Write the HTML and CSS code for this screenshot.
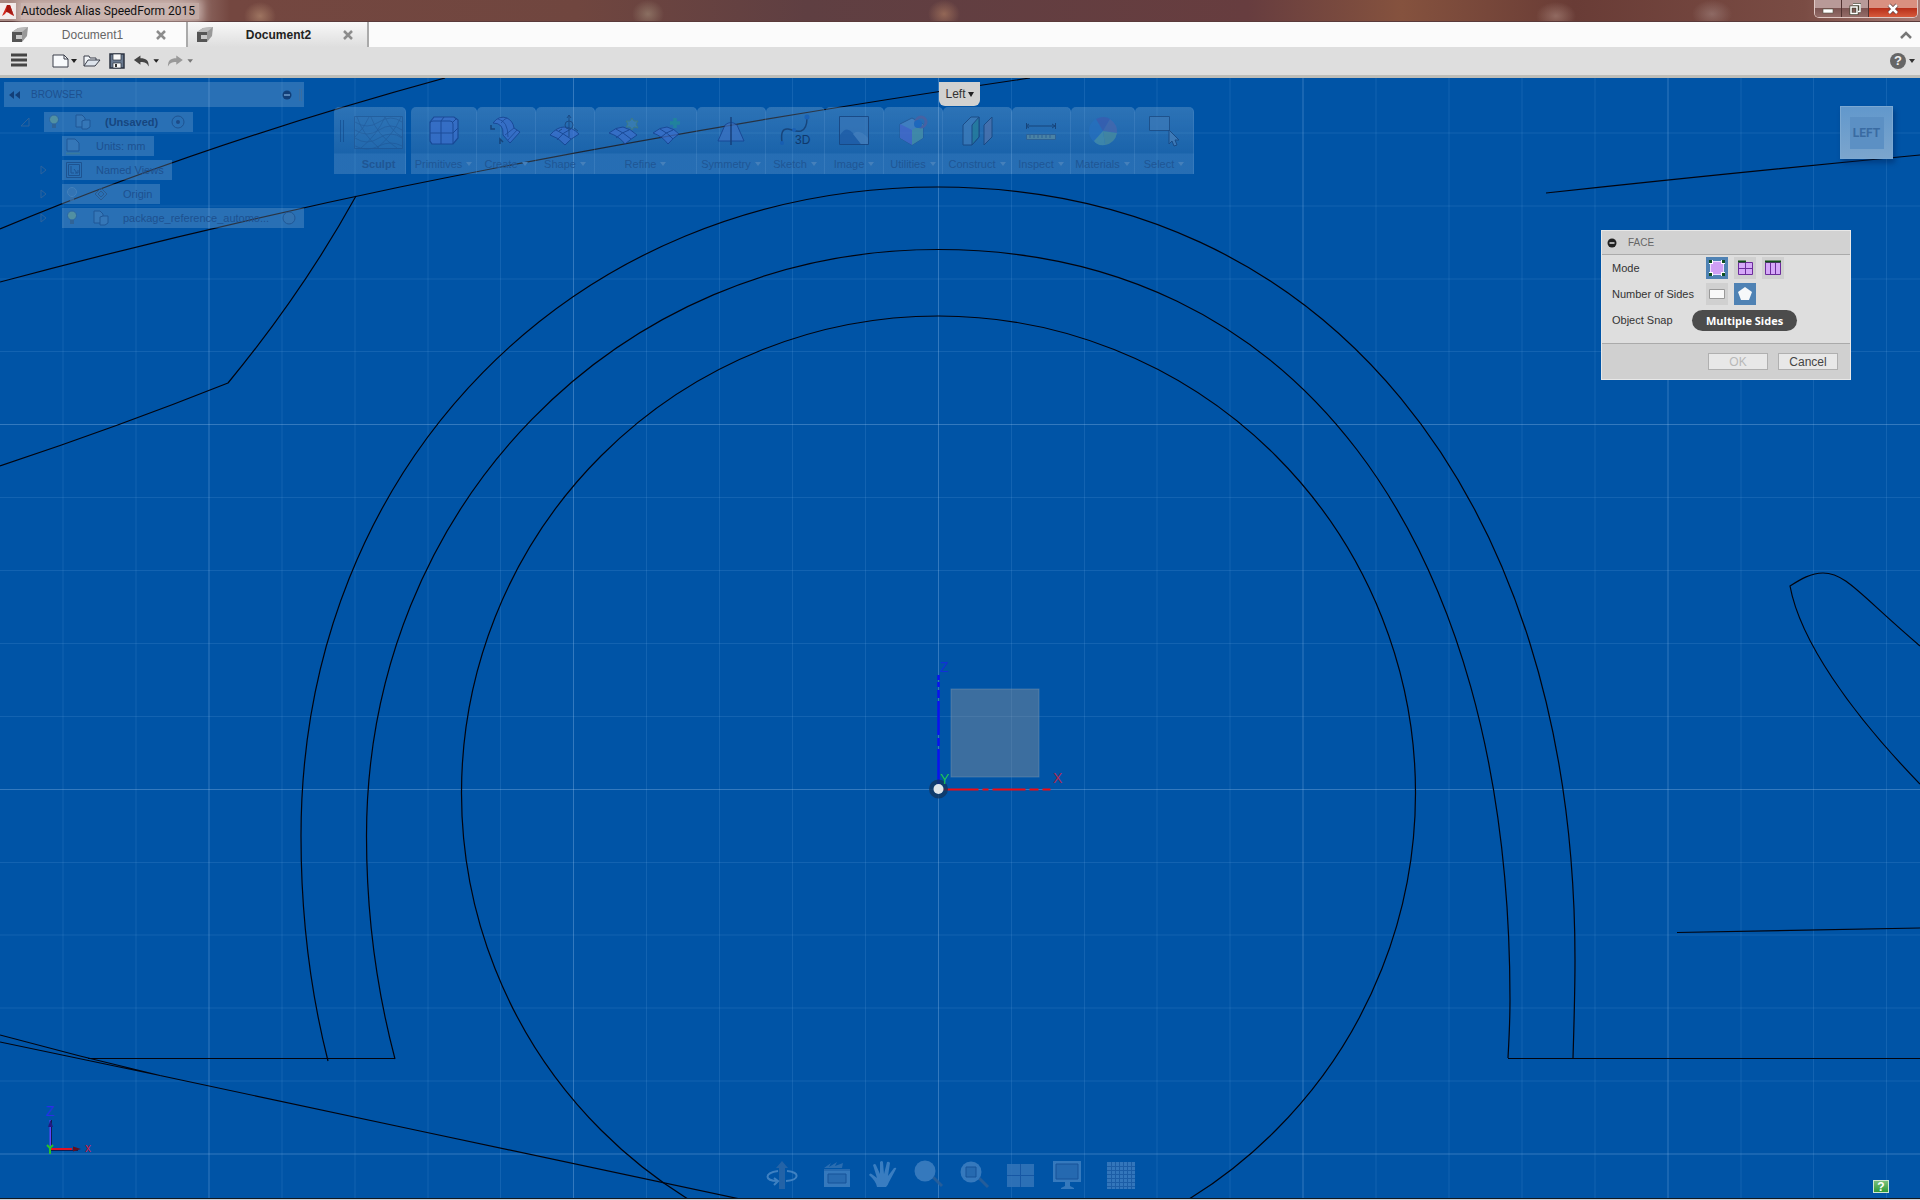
FILE: index.html
```html
<!DOCTYPE html>
<html lang="en">
<head>
  <meta charset="UTF-8">
  <meta name="viewport" content="width=device-width, initial-scale=1.0">
  <title>Autodesk Alias SpeedForm 2015</title>
  <link rel="stylesheet" href="styles.css">
</head>
<body>
  <!-- Title bar -->
  <header class="titlebar">
    <svg class="app-logo" width="16" height="16" viewBox="0 0 16 16"><rect width="16" height="16" fill="#f4eeee"/><path d="M2 13L7 2h3l4 11-4-2-3-3-2 3z" fill="#d3281e"/><path d="M7 2l-1 7 4 1 4 3-4-11z" fill="#a3150f"/></svg>
    <span class="app-title">Autodesk Alias SpeedForm 2015</span>
    <div class="window-buttons">
      <button aria-label="Minimize"><svg width="12" height="12" viewBox="0 0 12 12"><rect x="1" y="6" width="10" height="4" fill="#fff" stroke="#554" stroke-width=".6"/></svg></button>
      <button aria-label="Restore"><svg width="12" height="12" viewBox="0 0 12 12"><path d="M4 1h7v7h-2M2 4h6v7H2z" fill="none" stroke="#443" stroke-width="3"/><path d="M4 1.500h7v7h-2M2 4h6v6.500H2z" fill="none" stroke="#fff" stroke-width="1.500"/></svg></button>
      <button class="close" aria-label="Close"><svg width="12" height="12" viewBox="0 0 12 12"><path d="M2 2l8 8M10 2l-8 8" stroke="#644" stroke-width="4"/><path d="M2 2l8 8M10 2l-8 8" stroke="#fff" stroke-width="2.500"/></svg></button>
    </div>
  </header>

  <!-- Document tabs -->
  <nav class="tabs">
    <div class="tab">
      <svg width="18" height="18" viewBox="0 0 18 18"><path d="M1 6l6-4 10-1-1 9-5 6H1z" fill="#999"/><path d="M1 6h10v10H1z" fill="#555"/><path d="M1 6l6-4 10-1-6 5z" fill="#bbb"/><path d="M5 9h6v4H5z" fill="#c8c8c8"/></svg>
      <a href="#">Document1</a>
      <button aria-label="Close Document1"><svg width="10" height="10" viewBox="0 0 10 10"><path d="M1 1l8 8M9 1l-8 8" stroke="#8c8c8c" stroke-width="2.500"/></svg></button>
    </div>
    <div class="tab active">
      <svg width="18" height="18" viewBox="0 0 18 18"><path d="M1 6l6-4 10-1-1 9-5 6H1z" fill="#999"/><path d="M1 6h10v10H1z" fill="#555"/><path d="M1 6l6-4 10-1-6 5z" fill="#bbb"/><path d="M5 9h6v4H5z" fill="#c8c8c8"/></svg>
      <a href="#">Document2</a>
      <button aria-label="Close Document2"><svg width="10" height="10" viewBox="0 0 10 10"><path d="M1 1l8 8M9 1l-8 8" stroke="#8c8c8c" stroke-width="2.500"/></svg></button>
    </div>
    <button class="collapse" aria-label="Collapse"><svg width="14" height="10" viewBox="0 0 14 10"><path d="M2 8l5-5 5 5" fill="none" stroke="#777" stroke-width="2.500"/></svg></button>
  </nav>

  <!-- Quick access bar -->
  <div class="quickbar">
    <button class="menu" aria-label="Menu"><svg width="18" height="16" viewBox="0 0 18 16"><path d="M1 2h16M1 7h16M1 12h16" stroke="#444" stroke-width="3"/></svg></button>
    <button class="new" aria-label="New"><svg width="26" height="16" viewBox="0 0 26 16"><path d="M1 2h11l4 4v8H1z" fill="#f8fafc" stroke="#3a3f4a"/><path d="M12 2v4h4" fill="none" stroke="#3a3f4a"/><path d="M19 6h6l-3 4z" fill="#222"/></svg></button>
    <button aria-label="Open"><svg width="18" height="16" viewBox="0 0 18 16"><path d="M1 13V3h5l1 2h6v2" fill="#f2f5f8" stroke="#3a3f4a"/><path d="M1 13l4-6h12l-5 6z" fill="#dde4ec" stroke="#3a3f4a"/></svg></button>
    <button aria-label="Save"><svg width="16" height="16" viewBox="0 0 16 16"><path d="M1 1h14v14H1z" fill="#6a7a90" stroke="#2c3340" stroke-width="1.500"/><path d="M4 1h8v6H4zM4 10h8v5H4z" fill="#f8f8f8" stroke="#2c3340" stroke-width=".7"/><path d="M6 11h2v3H6z" fill="#333"/></svg></button>
    <button aria-label="Undo"><svg width="26" height="14" viewBox="0 0 28 14"><path d="M1 6l7-5v3c6 0 9 2 9 9-2-4-4-5-9-5v3z" fill="#444"/><path d="M22 5h6l-3 4z" fill="#222"/></svg></button>
    <button aria-label="Redo"><svg width="26" height="14" viewBox="0 0 28 14"><path d="M17 6l-7-5v3c-6 0-9 2-9 9 2-4 4-5 9-5v3z" fill="#999"/><path d="M22 5h6l-3 4z" fill="#777"/></svg></button>
    <button class="help" aria-label="Help"><span class="help-mark">?</span><svg width="6" height="4" viewBox="0 0 6 4"><path d="M0 0h6l-3 4z" fill="#333"/></svg></button>
  </div>

  <main class="viewport">
    <!-- Drawing canvas -->
    <svg class="canvas" viewBox="0 78 1920 1120" preserveAspectRatio="xMidYMin slice">
      <path class="grid-minor" d="M63 78v1120M136 78v1120M282 78v1120M355 78v1120M428 78v1120M500.500 78v1120M646.500 78v1120M719.500 78v1120M792.500 78v1120M865.500 78v1120M1011.500 78v1120M1084.500 78v1120M1157 78v1120M1230 78v1120M1376 78v1120M1449 78v1120M1522 78v1120M1595 78v1120M1741 78v1120M1813.500 78v1120M1886.500 78v1120M0 133h1920M0 206h1920M0 279h1920M0 351.500h1920M0 497.500h1920M0 570.500h1920M0 643.500h1920M0 716.500h1920M0 862.500h1920M0 935h1920M0 1008h1920M0 1081h1920"/>
      <path class="grid-major" d="M209 78v1120M573.500 78v1120M938.500 78v1120M1303 78v1120M1668 78v1120M0 424.500h1920M0 789.500h1920M0 1154h1920"/>

      <g class="sketch">
        <!-- body lines -->
        <path d="M0 229Q200 145 445 78"/>
        <path d="M0 282Q195 230 400 187Q700 126 1030 78"/>
        <path d="M356 196Q303 292 228 383Q120 426 0 466"/>
        <path d="M1546 193Q1720 174 1920 155"/>
        <path d="M1677 932.500L1920 928"/>
        <path d="M1920 646C1860 595 1846 573 1823 573C1811 573 1801 579 1790 586C1800 640 1850 712 1920 784"/>
        <!-- ground -->
        <path d="M88 1058.500H395M1508 1058.500H1920"/>
        <path d="M0 1035L80 1056L160 1075.500M0 1042L160 1075.500L420 1131L740 1199"/>
        <!-- wheel and arches -->
        <circle cx="938.500" cy="793" r="477"/>
        <path d="M328 1061C310 990 301 915 301 836C301 465 574 187 938 187C1323 187 1575 493 1575 960C1575 993 1574 1025 1573 1058"/>
        <path d="M395 1059C376 987 366.500 912 366.500 836C366.500 507 617 249.500 938 249.500C1293 249.500 1510 534 1510 1000C1510 1020 1509 1040 1508 1058"/>
      </g>

      <!-- origin -->
      <rect x="951" y="689" width="88" height="88" fill="#969696" fill-opacity=".4" stroke="#7f9db8" stroke-opacity=".4"/>
      <path d="M938.500 789V675" stroke="#0a12f0" stroke-width="2.500" stroke-dasharray="40 3 8 3 34 3 8 3 5 2"/>
      <path d="M938.500 789.500H1052" stroke="#f00a12" stroke-width="2" stroke-dasharray="40 4 6 4 33 4 9 4 8 9"/>
      <circle cx="938.500" cy="789" r="7" fill="none" stroke="#12365f" stroke-opacity=".8" stroke-width="5"/>
      <circle cx="938.500" cy="789" r="5" fill="#dfe6ea"/>
      <text x="940" y="672" fill="#1230d8">Z</text>
      <text x="940" y="784" fill="#1fc455">Y</text>
      <text x="1053" y="783" fill="#a82850">X</text>

      <!-- small triad -->
      <path d="M50.500 1149v-29" stroke="#5a45ff" stroke-width="2"/>
      <path d="M51.500 1149v-29M50 1150.500h28" stroke="#111c50"/>
      <path d="M50 1149h22" stroke="#e01225" stroke-width="2"/>
      <path d="M73 1146.500l8 2.500-8 2.500z" fill="#601020"/>
      <path d="M48 1127l2.500-7 2.500 7z" fill="#241a80"/>
      <path d="M47 1145l3 3 3-3M50 1148v6" stroke="#28c428" stroke-width="2" fill="none"/>
      <text x="46" y="1116" fill="#2a2fe8">Z</text>
      <text class="small" x="85" y="1152" fill="#c51a40">x</text>
    </svg>

    <!-- Browser panel -->
    <section class="browser">
      <div class="browser-head">
        <svg width="12" height="8" viewBox="0 0 12 8"><path d="M5 0v8L0 4zM11 0v8L6 4z" fill="#123f78"/></svg>
        <span class="browser-title">BROWSER</span>
        <svg width="20" height="12" viewBox="0 0 20 12"><circle cx="5" cy="6" r="4.500" fill="#123f78"/><path d="M2 6h6" stroke="#6f9dcb" stroke-width="1.500"/><path d="M17.500 0v12M19.500 0v12" stroke="#3f6b9a" stroke-width=".7"/></svg>
      </div>
      <ul class="tree">
        <li class="root">
          <svg class="arrow" width="10" height="10" viewBox="0 0 10 10"><path d="M9 1v8H1z" fill="none" stroke="#2d639d"/></svg>
          <div class="node">
            <svg class="bulb" width="14" height="16" viewBox="0 0 14 16"><circle cx="7" cy="5.500" r="4.500" fill="#5f9b9c" stroke="#2b629d"/><path d="M5 10h4v4H5z" fill="#315f8d"/></svg>
            <svg class="doc" width="18" height="18" viewBox="0 0 18 18"><path d="M2 2h6l3 3v2h5v7l-3 2H8v-2H2zM8 14V8l3-1" fill="#3a7ab9" stroke="#1c4f8d"/></svg>
            <b>(Unsaved)</b>
            <svg width="14" height="14" viewBox="0 0 14 14"><circle cx="7" cy="7" r="6" fill="none" stroke="#1a4a86"/><circle cx="7" cy="7" r="2" fill="#1a3f78"/></svg>
          </div>
        </li>
        <li>
          <div class="node">
            <svg class="doc" width="18" height="18" viewBox="0 0 18 18"><path d="M2 2h8l4 4v8H2z" fill="#3a7ab9" stroke="#1c4f8d"/><path d="M1 16.500h14" stroke="#3d7c98" stroke-width="2"/></svg>
            <span>Units: mm</span>
          </div>
        </li>
        <li>
          <svg class="arrow" width="10" height="10" viewBox="0 0 10 10"><path d="M3 1l5 4-5 4z" fill="none" stroke="#2d639d"/></svg>
          <div class="node">
            <svg class="doc" width="18" height="18" viewBox="0 0 18 18"><path d="M1.500 1.500h15v15h-15zM3.500 3.500h11v11h-11zM6 5v7h3M9 8l3 4M10 12h3V9" fill="none" stroke="#1a4a86"/></svg>
            <span>Named Views</span>
          </div>
        </li>
        <li>
          <svg class="arrow" width="10" height="10" viewBox="0 0 10 10"><path d="M3 1l5 4-5 4z" fill="none" stroke="#2d639d"/></svg>
          <div class="node">
            <svg class="bulb" width="14" height="16" viewBox="0 0 14 16"><circle cx="7" cy="6" r="4.500" fill="#3776b4" stroke="#4c86bd"/><path d="M5 11h4v4H5z" fill="#396fa7"/></svg>
            <svg class="doc" width="18" height="18" viewBox="0 0 18 18"><path d="M9 3l6 6-6 6-6-6zM9 6l3 3-3 3-3-3z" fill="none" stroke="#2a5486"/></svg>
            <span>Origin</span>
          </div>
        </li>
        <li>
          <svg class="arrow" width="10" height="10" viewBox="0 0 10 10"><path d="M3 1l5 4-5 4z" fill="none" stroke="#2d639d"/></svg>
          <div class="node long">
            <svg class="bulb" width="14" height="16" viewBox="0 0 14 16"><circle cx="7" cy="5.500" r="4.500" fill="#5f9b9c" stroke="#2b629d"/><path d="M5 10h4v4H5z" fill="#315f8d"/></svg>
            <svg class="doc" width="18" height="18" viewBox="0 0 18 18"><path d="M2 2h6l3 3v2h5v7l-3 2H8v-2H2zM8 14V8l3-1" fill="#3a7ab9" stroke="#1c4f8d"/></svg>
            <span>package_reference_automo...</span>
            <svg width="14" height="14" viewBox="0 0 14 14"><circle cx="7" cy="7" r="6" fill="#3573b0" stroke="#1f508c"/></svg>
          </div>
        </li>
      </ul>
    </section>

    <!-- Ribbon -->
    <div class="ribbon">
      <button class="tool sculpt">
        <svg width="70" height="42" viewBox="0 0 70 42"><path d="M5.500 12v22M8.500 12v22" stroke="#0d4080"/><path d="M19.500 8.500h48v32h-48z" fill="#3d7cba" fill-opacity=".4" stroke="#1f4f8a"/><path d="M20 14q12 8 24 0t23 0M20 22q12 8 24 0t23 0M20 30q12 8 24 0t23 0M20 38q12 6 24 0t23 0M22 9q6 18 22 31M36 9q6 18 26 31M50 9q6 14 17 20M66 9q-8 18-24 31M50 9q-8 18-24 31M34 9q-4 10-14 20" fill="none" stroke="#1f4f8a" stroke-width=".7"/></svg>
        <span class="label"><b>Sculpt</b></span>
      </button>
      <div class="tools">
        <button class="tool">
          <svg width="34" height="34" viewBox="0 0 34 34"><path d="M3 9l4-5h20l4 3v18l-5 6H5l-2-3z" fill="#3c6fce" stroke="#153c8c" stroke-width="1.200"/><path d="M3 10q1-2 3-2h17q3 0 3 3v20M26 9l4-4M14 8v23M3 20h23M14 8l3-4M26 20l5-5" fill="none" stroke="#153c8c"/></svg>
          <span class="label">Primitives<i></i></span>
        </button>
        <button class="tool">
          <svg width="34" height="34" viewBox="0 0 34 34"><path d="M4 10q6-8 14-5 6 3 7 10l6 4-10 11-7-8q1-12-10-12z" fill="#3c6fce" stroke="#153c8c"/><path d="M9 6q10 2 10 18M18 5q-3 1-6 5M25 15l-9 7M28 17l-9 10" fill="none" stroke="#153c8c" stroke-width=".8"/><path d="M2 12v4h4M11 31v-5l3 3" fill="none" stroke="#123565" stroke-width="1.500"/></svg>
          <span class="label">Create<i></i></span>
        </button>
        <button class="tool">
          <svg width="34" height="34" viewBox="0 0 34 34"><path d="M2 22q7-8 14-8 8 0 15 7-9 5-14 11-7-8-15-10z" fill="#3c6fce" stroke="#153c8c"/><path d="M9 27q6-8 14-11M8 17q8 4 15 9" fill="none" stroke="#153c8c"/><circle cx="21" cy="12" r="4" fill="none" stroke="#173f75"/><path d="M21 2v22M19 5l2-3 2 3M14 16l-3 2M26 15l4 3" fill="none" stroke="#173f75"/></svg>
          <span class="label">Shape<i></i></span>
        </button>
        <button class="tool">
          <span class="pair">
            <svg width="34" height="34" viewBox="0 0 34 34"><path d="M2 20q7-6 14-6 8 2 14 8-6 4-12 9-6-8-16-11z" fill="#3c6fce" stroke="#153c8c"/><path d="M9 25q6-6 13-8M9 16q8 4 15 10" fill="none" stroke="#153c8c"/><path d="M25 5l2 3 4 0-2 3 2 4-4-1-2 3-2-3-4 0 2-3-2-3 4 0z" fill="#3e81b2" stroke="#447f75"/></svg>
            <svg width="34" height="34" viewBox="0 0 34 34"><path d="M2 20q7-6 14-6 8 2 12 7-6 4-11 10-6-8-15-11z" fill="#3c6fce" stroke="#153c8c"/><path d="M9 25q6-6 13-8M9 16q8 4 13 10" fill="none" stroke="#153c8c"/><path d="M24 5v10M19 10h10" stroke="#1f8d95" stroke-width="3.500"/></svg>
          </span>
          <span class="label">Refine<i></i></span>
        </button>
        <button class="tool">
          <svg width="34" height="34" viewBox="0 0 34 34"><path d="M4 28l7-16q6-5 12 0l7 16z" fill="#3c72c4" stroke="#153c8c"/><path d="M17 4v28" stroke="#122f66" stroke-width="1.500"/></svg>
          <span class="label">Symmetry<i></i></span>
        </button>
        <button class="tool">
          <svg width="34" height="34" viewBox="0 0 34 34"><path d="M4 29q-2-14 6-13c6 1 6 3 13 2q6-2 6-13" fill="none" stroke="#123565" stroke-width="1.500"/><circle cx="4" cy="30" r="2" fill="#155bb5"/><circle cx="29" cy="4" r="2.500" fill="#155bb5"/><circle cx="16" cy="17" r="2" fill="#155bb5"/><text x="17" y="31" class="icon-text">3D</text></svg>
          <span class="label">Sketch<i></i></span>
        </button>
        <button class="tool">
          <svg width="34" height="34" viewBox="0 0 34 34"><path d="M2.500 3.500h29v28h-29z" fill="#3876b8" stroke="#153c75"/><path d="M3 31V22q6-10 13-2l8 11z" fill="#1f5ba6"/><path d="M16 21q6-6 15 4v6h-7z" fill="#4a82bf"/></svg>
          <span class="label">Image<i></i></span>
        </button>
        <button class="tool">
          <svg width="34" height="34" viewBox="0 0 34 34"><path d="M4 11l12-6 11 6v14l-11 7-12-7z" fill="#4a86c6" stroke="#24538e"/><path d="M4 11l12 6v15l-12-7z" fill="#4968cf"/><path d="M16 17l11-6v14l-11 7z" fill="#4b94a6"/><circle cx="25" cy="9" r="5" fill="none" stroke="#545d9d" stroke-width="3"/><circle cx="22" cy="11" r="4" fill="#1b66c2"/></svg>
          <span class="label">Utilities<i></i></span>
        </button>
        <button class="tool">
          <svg width="34" height="34" viewBox="0 0 34 34"><path d="M3 12l8-8h8v20l-7 8H3z" fill="#3f7dbb" stroke="#173f75"/><path d="M12 12l7-8v20l-7 8z" fill="#257f97" stroke="#173f75"/><path d="M24 12l8-8v20l-8 8z" fill="#5072ac" stroke="#173f75"/></svg>
          <span class="label">Construct<i></i></span>
        </button>
        <button class="tool">
          <svg width="34" height="34" viewBox="0 0 34 34"><path d="M2 13h29M2.500 10v6M31.500 10v6M5 11l-3 2 3 2M28 11l3 2-3 2" fill="none" stroke="#123565"/><path d="M2.500 21.500h29v5h-29z" fill="#5d8da0" stroke="#315f8d"/><path d="M6 22v3M10 22v3M14 22v3M18 22v3M22 22v3M26 22v3" stroke="#315f8d"/></svg>
          <span class="label">Inspect<i></i></span>
        </button>
        <button class="tool">
          <svg width="34" height="34" viewBox="0 0 34 34"><circle cx="17" cy="18" r="14" fill="#2670c0"/><path d="M17 18L10 6q8-4 14 0z" fill="#3b5aaf"/><path d="M17 18l7-12q8 6 7 14z" fill="#4a67ad"/><path d="M17 18l14 2q-2 10-12 12z" fill="#4c8f9d"/><path d="M17 18l2 14q-8 1-11-4z" fill="#4a93aa"/></svg>
          <span class="label">Materials<i></i></span>
        </button>
        <button class="tool">
          <svg width="34" height="34" viewBox="0 0 34 34"><path d="M2.500 3.500h20v14h-20z" fill="#3d7ab8" stroke="#1a467c"/><path d="M22 17v14l3-3 2 5 3-1-2-5h4z" fill="#4a82bc" stroke="#173f75"/></svg>
          <span class="label">Select<i></i></span>
        </button>
      </div>
    </div>

    <button class="view-name">Left<svg width="6" height="5" viewBox="0 0 6 5"><path d="M0 0h6L3 5z" fill="#222"/></svg></button>
    <button class="viewcube"><span>LEFT</span></button>

    <!-- Face dialog -->
    <form class="dialog">
      <div class="dialog-head">
        <svg width="10" height="10" viewBox="0 0 10 10"><circle cx="5" cy="5" r="4.500" fill="#222"/><path d="M2.500 5h5" stroke="#ddd" stroke-width="1.500"/></svg>
        <span>FACE</span>
      </div>
      <div class="dialog-body">
        <div class="field" role="group" aria-labelledby="mode">
          <span class="name" id="mode">Mode</span>
          <button type="button" class="option on" aria-label="Single"><svg width="18" height="18" viewBox="0 0 18 18"><path d="M2.500 2.500h13v13h-13z" fill="#cf9ff5" stroke="#eadcff"/><path d="M1 1h4v4H1zM13 1h4v4h-4zM1 13h4v4H1zM13 13h4v4h-4z" fill="#fff"/><path d="M1 1h3v3H1zM14 1h3v3h-3zM1 14h3v3H1zM14 14h3v3h-3z" fill="#0e4f20"/></svg></button>
          <button type="button" class="option" aria-label="Multiple"><svg width="18" height="18" viewBox="0 0 18 18"><path d="M2.500 3.500h14v12h-14z" fill="#d5a8f8" stroke="#6c2c9c"/><path d="M9.500 3v13M2 9.500h15" stroke="#6c2c9c"/><path d="M2 2.500h8" stroke="#124f18" stroke-width="2"/></svg></button>
          <button type="button" class="option" aria-label="Strip"><svg width="18" height="18" viewBox="0 0 18 18"><path d="M1.500 3.500h15v12h-15z" fill="#d5a8f8" stroke="#6c2c9c"/><path d="M6.500 3v13M11.500 3v13" stroke="#6c2c9c"/><path d="M1 2.500h16" stroke="#124f18" stroke-width="2"/></svg></button>
        </div>
        <div class="field" role="group" aria-labelledby="sides">
          <span class="name" id="sides">Number of Sides</span>
          <button type="button" class="option" aria-label="Four sides"><svg width="18" height="18" viewBox="0 0 18 18"><path d="M1.500 4.500h15v9h-15z" fill="#f8f8f8" stroke="#999"/></svg></button>
          <button type="button" class="option on" aria-label="Multiple sides"><svg width="18" height="18" viewBox="0 0 18 18"><path d="M9 2l7 5-3 8H5L2 7z" fill="#f6f8fa"/></svg></button>
        </div>
        <div class="field">
          <span class="name">Object Snap</span>
          <span class="tooltip" role="tooltip">Multiple Sides</span>
        </div>
      </div>
      <div class="dialog-foot">
        <button type="button" disabled>OK</button>
        <button type="button">Cancel</button>
      </div>
    </form>

    <!-- Navigation bar -->
    <div class="navbar">
      <button class="apart" aria-label="Orbit"><svg width="32" height="32" viewBox="0 0 32 32"><path d="M16 2l6 7h-3v21h-6V9h-3z" fill="#2a66a8"/><path d="M12 12C-2 14-2 22 12 22M8 19l4 3-4 4M20 22c14-1 14-9 1-10" fill="none" stroke="#4a8ac8" stroke-width="2"/></svg></button>
      <button aria-label="Look at"><svg width="32" height="32" viewBox="0 0 32 32"><path d="M3 10h26v18H3z" fill="#3f80c2"/><path d="M7 15h18v9H7z" fill="#2f70b4" stroke="#1a5296"/><path d="M3 9l7-5-2 4 8-5-2 4 8-3-1 5z" fill="#3272b4"/><path d="M3 11h26" stroke="#1d5da6"/></svg></button>
      <button aria-label="Pan"><svg width="32" height="32" viewBox="0 0 32 32"><path d="M10 28q-1-6-8-12 1-3 4 0l4 3L6 6q2-2 3 0l4 9V3q2-2 3 0l1 12 3-12q2-1 3 1l-2 13 6-8q3-1 2 1l-7 13q-1 3-3 5z" fill="#4385c6"/></svg></button>
      <button aria-label="Zoom"><svg width="32" height="32" viewBox="0 0 32 32"><path d="M20 18l9 9" stroke="#2b5f99" stroke-width="3"/><circle cx="12" cy="12" r="10.500" fill="#3f80c2"/></svg></button>
      <button aria-label="Fit"><svg width="32" height="32" viewBox="0 0 32 32"><path d="M20 19l9 9" stroke="#2b5f99" stroke-width="3"/><circle cx="12" cy="13" r="10.500" fill="#3f80c2"/><path d="M7 8h10v10H7z" fill="#2d6eb2" stroke="#1a5296"/></svg></button>
      <button aria-label="Views"><svg width="32" height="32" viewBox="0 0 32 32"><path d="M2 5h27v23H2z" fill="#3475b9"/><path d="M15.500 5v23M2 16.500h27" stroke="#1a58a4"/></svg></button>
      <button aria-label="Display"><svg width="32" height="32" viewBox="0 0 32 32"><path d="M2 2h28v21H2z" fill="#3f80c2"/><path d="M5 5h22v15H5z" fill="#2c6db2" stroke="#1a5296"/><path d="M14 23h5v4l4 2v1H10v-1l4-2z" fill="#3f80c2"/></svg></button>
      <button class="last" aria-label="Grid"><svg width="32" height="32" viewBox="0 0 32 32"><path d="M2 3h28v27H2z" fill="#3c7cbf"/><path d="M6.500 3v27M10.500 3v27M14.500 3v27M18.500 3v27M22.500 3v27M26.500 3v27M2 7.500h28M2 11.500h28M2 15.500h28M2 19.500h28M2 23.500h28M2 27.500h28" stroke="#225fa6"/></svg></button>
    </div>

    <button class="status" aria-label="Status">?</button>
  </main>
  <div class="taskbar"></div>
</body>
</html>
```
FILE: styles.css
```css
* {
  box-sizing: border-box;
}
body {
  margin: 0;
  height: 100vh;
  display: flex;
  flex-direction: column;
  overflow: hidden;
  font-family: "Liberation Sans", Arial, sans-serif;
  font-size: 11px;
  color: #333;
}
button {
  margin: 0;
  padding: 0;
  border: none;
  background: none;
  font: inherit;
  color: inherit;
  display: flex;
  align-items: center;
  justify-content: center;
}
svg {
  display: block;
  flex-shrink: 0;
}

/* title bar */
.titlebar {
  height: 22px;
  flex-shrink: 0;
  display: flex;
  align-items: flex-start;
  padding-top: 3px;
  border-bottom: 1px solid #5a3a3a;
  background: radial-gradient(ellipse 16px 14px at 260px 16px, rgba(175, 135, 110, 0.7), transparent),
    radial-gradient(ellipse 16px 14px at 648px 14px, rgba(160, 140, 120, 0.6), transparent),
    radial-gradient(ellipse 16px 14px at 944px 14px, rgba(180, 130, 100, 0.6), transparent),
    radial-gradient(ellipse 20px 14px at 1556px 16px, rgba(170, 135, 125, 0.6), transparent),
    radial-gradient(ellipse 20px 14px at 1712px 14px, rgba(160, 130, 125, 0.6), transparent),
    linear-gradient(to right, #a88a84 0, #a88a84 170px, #744740 230px, #70463f 30%, #5f3f42 42%, #673d3f 65%, #85523e 73%, #693c36 82%, #7a4c44 94%, #a57a74);
}
.app-logo {
  margin-right: 5px;
}
.app-title {
  font-family: Roboto, "Open Sans", sans-serif;
  font-size: 12px;
  line-height: 16px;
  color: #111;
  padding-right: 4px;
  background: rgba(225, 208, 204, 0.6);
  box-shadow: 0 0 8px 4px rgba(225, 208, 204, 0.6);
}
.window-buttons {
  display: flex;
  margin: -3px 2px 0 auto;
  border: 1px solid #e0c8c4;
  border-top: none;
  border-radius: 0 0 5px 5px;
  overflow: hidden;
}
.window-buttons button {
  width: 27px;
  height: 17px;
  background: linear-gradient(#b89a98 45%, #7c5552 50%, #946c68);
  border-right: 1px solid #503230;
}
.window-buttons .close {
  width: 48px;
  border: none;
  background: linear-gradient(#d99080 45%, #b8301a 50%, #d65a3c);
}

/* tabs */
.tabs {
  height: 25px;
  flex-shrink: 0;
  display: flex;
  align-items: stretch;
  background: #fbfbfb;
}
.tab {
  width: 188px;
  display: flex;
  align-items: center;
  padding: 0 20px 0 11px;
  font-size: 12px;
  border-right: 2px solid #aaa;
}
.tab.active {
  width: 181px;
  padding: 0 14px 0 8px;
  background: linear-gradient(#f8f8f8, #dedede);
  font-weight: bold;
}
.tab a {
  flex: 1;
  text-align: center;
  color: #666;
  text-decoration: none;
}
.tab.active a {
  color: #222;
}
.collapse {
  margin-left: auto;
  width: 28px;
}

/* quick access bar */
.quickbar {
  height: 31px;
  flex-shrink: 0;
  display: flex;
  align-items: center;
  gap: 8px;
  padding: 0 5px 0 10px;
  background: #dedede;
  border-bottom: 3px solid #bdbdb8;
}
.quickbar .menu {
  margin-right: 16px;
}
.quickbar .new {
  margin-right: -3px;
}
.quickbar .help {
  margin-left: auto;
  gap: 3px;
}
.help-mark {
  width: 16px;
  height: 16px;
  border-radius: 50%;
  background: #666;
  color: #eee;
  font-weight: bold;
  font-size: 13px;
  line-height: 16px;
}

/* viewport */
.viewport {
  flex: 1;
  min-height: 0;
  position: relative;
  overflow: hidden;
  background: #0054a6;
}
.canvas {
  width: 100%;
  height: 100%;
}
.canvas text {
  font-size: 14px;
}
.canvas .small {
  font-size: 12px;
}
.grid-minor {
  stroke: rgba(150, 200, 255, 0.13);
}
.grid-major {
  stroke: rgba(170, 210, 245, 0.3);
}
.sketch {
  fill: none;
  stroke: #02040e;
  stroke-width: 1.2;
}

/* browser */
.browser {
  position: absolute;
  left: 4px;
  top: 4px;
  width: 300px;
  color: #1d5090;
}
.browser-head,
.node {
  background: rgba(160, 195, 225, 0.26);
}
.browser-head {
  height: 25px;
  display: flex;
  align-items: center;
  gap: 10px;
  padding: 0 2px 0 5px;
  font-size: 10px;
}
.browser-title {
  flex: 1;
}
.tree {
  list-style: none;
  margin: 5px 0 0;
  padding: 0;
  display: flex;
  flex-direction: column;
  gap: 4px;
}
.tree li {
  height: 20px;
  padding: 0 4px 0 58px;
  display: flex;
}
.tree .root {
  padding-left: 40px;
}
.root b {
  color: #164680;
}
.arrow {
  margin: 5px 14px 5px -24px;
}
.node {
  display: flex;
  align-items: center;
  gap: 13px;
  padding: 0 8px 0 3px;
}
.node svg {
  opacity: 0.75;
}
.node.long {
  flex: 1;
}
.node.long span {
  flex: 1;
}

/* ribbon */
.ribbon {
  position: absolute;
  left: 334px;
  top: 29px;
  display: flex;
  gap: 5px;
  color: #1f5694;
}
.tools {
  display: flex;
}
.tool {
  height: 67px;
  padding: 0 4px;
  min-width: 59px;
  flex-direction: column;
  justify-content: flex-end;
  gap: 7px;
  border-radius: 5px 5px 0 0;
  border-right: 1px solid rgba(120, 170, 220, 0.2);
  background: linear-gradient(rgba(160, 195, 225, 0.28), rgba(130, 165, 195, 0.2) 46px, rgba(160, 195, 225, 0.24) 47px);
}
.tool svg {
  opacity: 0.7;
}
.tool.sculpt {
  width: 72px;
  padding: 0;
  gap: 4px;
}
.sculpt svg {
  opacity: 0.5;
}
.label {
  height: 20px;
  line-height: 19px;
  display: flex;
  align-items: center;
  gap: 4px;
}
.sculpt .label {
  padding-left: 18px;
}
.label i {
  border: 3px solid transparent;
  border-top: 4px solid #4580bb;
  border-bottom: none;
}
.tools .tool:nth-child(1) {
  width: 66px;
}
.tools .tool:nth-child(4) {
  width: 102px;
}
.tools .tool:nth-child(5),
.tools .tool:nth-child(9) {
  width: 69px;
}
.tools .tool:nth-child(11) {
  width: 64px;
}
.pair {
  display: flex;
  gap: 10px;
}
.icon-text {
  font-size: 12px;
  fill: #0a2550;
}

.view-name {
  position: absolute;
  left: 939px;
  top: 4px;
  width: 41px;
  height: 24px;
  gap: 2px;
  background: #d2d2d0;
  border-radius: 0 0 6px 6px;
  font-size: 12px;
}
.viewcube {
  position: absolute;
  right: 27px;
  top: 28px;
  width: 53px;
  height: 53px;
  background: linear-gradient(#6298cc, #7ba5cd);
  border: 1px solid #7ba8d2;
  box-shadow: 2px 4px 5px rgba(0, 30, 80, 0.4);
}
.viewcube span {
  width: 34px;
  line-height: 32px;
  background: #5c90c4;
  color: #3a6ba2;
  font-family: Roboto, sans-serif;
  font-size: 12px;
  font-weight: bold;
}

/* dialog */
.dialog {
  position: absolute;
  right: 69px;
  top: 152px;
  width: 250px;
  background: #dedede;
  border: 1px solid #e8e8e8;
}
.dialog-head {
  height: 24px;
  display: flex;
  align-items: center;
  gap: 11px;
  padding-left: 5px;
  background: #d2d2d2;
  border-bottom: 1px solid #aaa;
  font-size: 10px;
  color: #666;
}
.dialog-body {
  display: flex;
  flex-direction: column;
  gap: 4px;
  padding: 2px 10px 12px;
}
.field {
  height: 22px;
  display: flex;
  align-items: center;
  gap: 6px;
  position: relative;
}
.name {
  width: 88px;
}
.option {
  width: 22px;
  height: 22px;
  background: #d0d0d0;
}
.option.on {
  background: #4f82b4;
}
.tooltip {
  position: absolute;
  left: 80px;
  top: 1px;
  padding: 0 14px;
  line-height: 21px;
  border-radius: 11px;
  background: #4c4c4c;
  color: #fff;
  font-family: "Open Sans", "Noto Sans", sans-serif;
  font-size: 11px;
  font-weight: bold;
  white-space: nowrap;
}
.dialog-foot {
  display: flex;
  justify-content: flex-end;
  gap: 10px;
  padding: 9px 12px;
  background: #d0d0d0;
  border-top: 1px solid #aaa;
}
.dialog-foot button {
  width: 60px;
  height: 17px;
  border: 1px solid #b0b0b0;
  background: #e8e8e8;
  font-size: 12px;
  color: #444;
}
.dialog-foot button:disabled {
  color: #b8b8b8;
}

/* navigation bar */
.navbar {
  position: absolute;
  left: 766px;
  bottom: 7px;
  display: flex;
  gap: 14px;
}
.navbar svg {
  opacity: 0.85;
}
.navbar .apart {
  margin-right: 9px;
}
.navbar .last {
  margin-left: 8px;
}

.status {
  position: absolute;
  right: 31px;
  bottom: 5px;
  width: 16px;
  height: 13px;
  border: 1px solid #cfe8d0;
  background: linear-gradient(#7cc07c, #2f9a38);
  color: #fff;
  font-size: 12px;
  font-weight: bold;
}
.taskbar {
  height: 2px;
  flex-shrink: 0;
  border-top: 1px solid #101820;
  background: #c8d0d8;
}
```
